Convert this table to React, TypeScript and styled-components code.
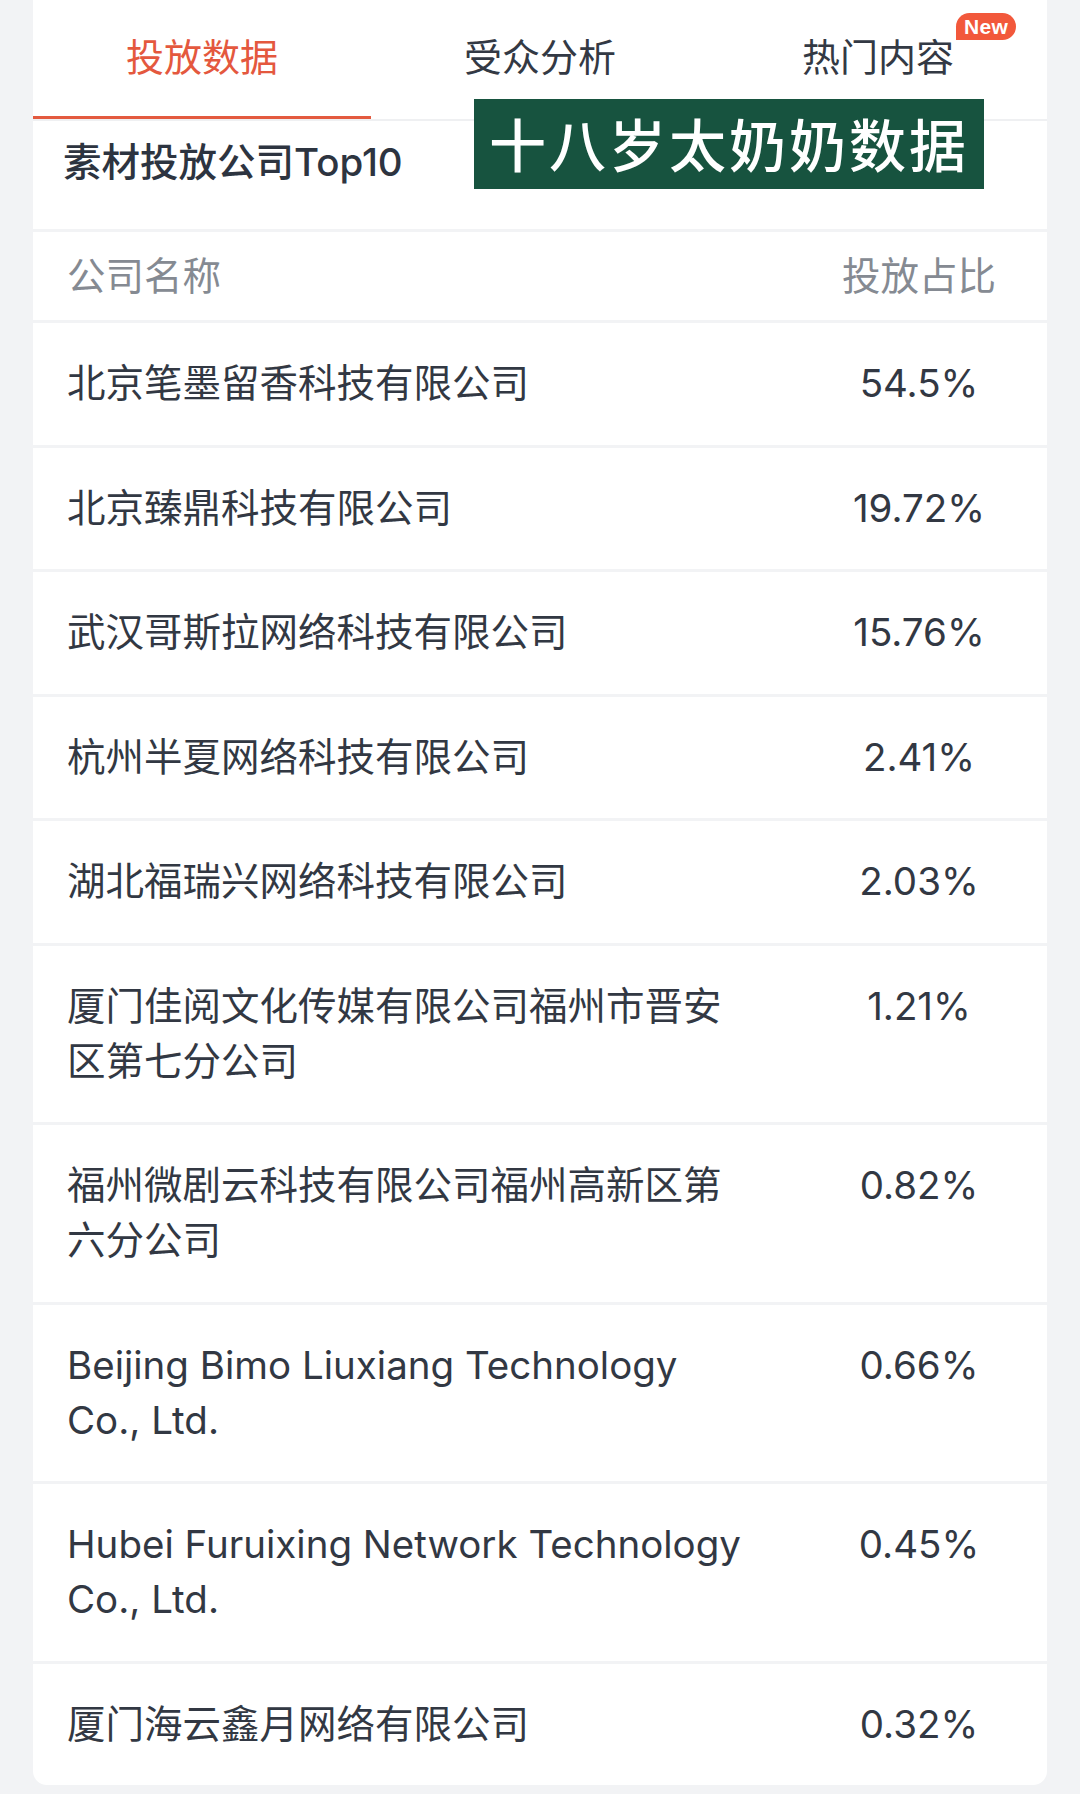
import React from "react";
import styled, { createGlobalStyle } from "styled-components";

const GlobalStyle = createGlobalStyle`
  html, body {
    margin: 0;
    padding: 0;
    background: #f2f3f5;
  }
  body {
    font-family: "Inter", "Noto Sans CJK SC", sans-serif;
    -webkit-font-smoothing: antialiased;
  }
`;

const Page = styled.div`
  width: 1080px;
  min-height: 1794px;
  box-sizing: border-box;
  padding: 0 33px 9px;
  background: #f2f3f5;
`;

const Card = styled.div`
  display: flex;
  flex-direction: column;
  gap: 3px;
  border-radius: 0 0 14px 14px;
  overflow: hidden;
`;

const TopBlock = styled.div`
  position: relative;
  background: #ffffff;
`;

const TabBar = styled.div`
  display: grid;
  grid-template-columns: repeat(3, 1fr);
  height: 119px;
  border-bottom: 2px solid #eff0f2;
`;

const Tab = styled.div<{ $active?: boolean }>`
  position: relative;
  display: flex;
  align-items: center;
  justify-content: center;
  padding-bottom: 3px;
  box-sizing: border-box;
  font-size: 38px;
  color: ${(p) => (p.$active ? "#e4583e" : "#333944")};
  border-bottom: 3px solid ${(p) => (p.$active ? "#e35a3f" : "transparent")};
`;

const TabLabel = styled.span`
  position: relative;
  line-height: 40px;
`;

const NewBadge = styled.span`
  position: absolute;
  left: 100%;
  top: -24px;
  margin-left: 2px;
  height: 27px;
  padding: 0 8px;
  border-radius: 14px 14px 14px 0;
  background: #f2583b;
  color: #ffffff;
  font-family: "Liberation Sans", Arial, sans-serif;
  font-size: 21px;
  font-weight: 700;
  line-height: 27px;
  letter-spacing: 0.3px;
`;

const SectionTitle = styled.div`
  padding: 16px 30px 42px;
  font-size: 38.5px;
  line-height: 50px;
  font-weight: 500;
  color: #2d3440;
`;

const Watermark = styled.div`
  position: absolute;
  left: 441px;
  top: 99px;
  width: 510px;
  height: 90px;
  box-sizing: border-box;
  display: flex;
  align-items: center;
  justify-content: center;
  background: #17533f;
  color: #ffffff;
  font-family: "Noto Sans CJK SC", sans-serif;
  font-size: 57px;
  font-weight: 500;
  letter-spacing: 3px;
  line-height: 1;
  padding-bottom: 4px;
`;

const Row = styled.div<{ $head?: boolean }>`
  display: grid;
  grid-template-columns: 1fr 188px;
  column-gap: 78px;
  align-items: start;
  background: #ffffff;
  padding: ${(p) => (p.$head ? "16.5px 34px 16.5px" : "33px 34px 33.5px")};
  font-size: 38.5px;
  line-height: 55px;
  color: ${(p) => (p.$head ? "#858a92" : "#323843")};
`;

const NameCell = styled.div`
  word-break: break-word;
`;

const RatioCell = styled.div`
  text-align: center;
`;

const rows: [string, string][] = [
  ["北京笔墨留香科技有限公司", "54.5%"],
  ["北京臻鼎科技有限公司", "19.72%"],
  ["武汉哥斯拉网络科技有限公司", "15.76%"],
  ["杭州半夏网络科技有限公司", "2.41%"],
  ["湖北福瑞兴网络科技有限公司", "2.03%"],
  ["厦门佳阅文化传媒有限公司福州市晋安区第七分公司", "1.21%"],
  ["福州微剧云科技有限公司福州高新区第六分公司", "0.82%"],
  ["Beijing Bimo Liuxiang Technology Co., Ltd.", "0.66%"],
  ["Hubei Furuixing Network Technology Co., Ltd.", "0.45%"],
  ["厦门海云鑫月网络有限公司", "0.32%"],
];

export default function App() {
  return (
    <>
      <GlobalStyle />
      <Page>
        <Card>
          <TopBlock>
            <TabBar>
              <Tab $active>
                <TabLabel>投放数据</TabLabel>
              </Tab>
              <Tab>
                <TabLabel>受众分析</TabLabel>
              </Tab>
              <Tab>
                <TabLabel>
                  热门内容
                  <NewBadge>New</NewBadge>
                </TabLabel>
              </Tab>
            </TabBar>
            <SectionTitle>素材投放公司Top10</SectionTitle>
            <Watermark>十八岁太奶奶数据</Watermark>
          </TopBlock>
          <Row $head>
            <NameCell>公司名称</NameCell>
            <RatioCell>投放占比</RatioCell>
          </Row>
          {rows.map(([name, ratio]) => (
            <Row key={name}>
              <NameCell>{name}</NameCell>
              <RatioCell>{ratio}</RatioCell>
            </Row>
          ))}
        </Card>
      </Page>
    </>
  );
}
